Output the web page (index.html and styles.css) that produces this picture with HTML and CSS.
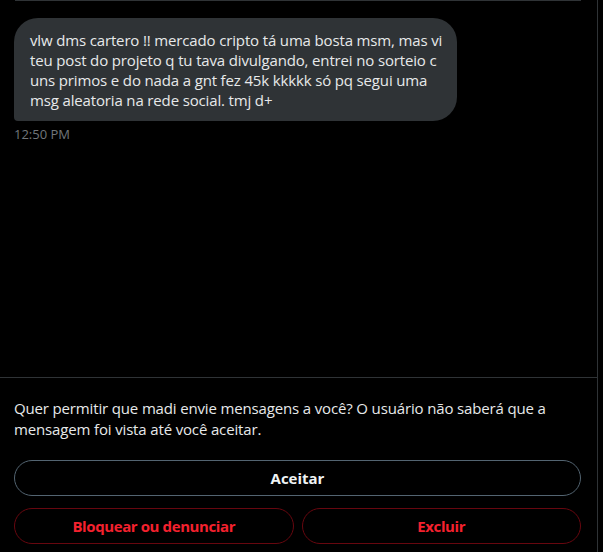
FILE: index.html
```html
<!DOCTYPE html>
<html lang="pt">
<head>
<meta charset="utf-8">
<link rel="stylesheet" href="styles.css">
</head>
<body>
<div class="column">
  <div class="convo">
    <div class="top-rule"></div>
    <div class="msg">
      <div class="bubble">vlw dms cartero !! mercado cripto tá uma bosta msm, mas vi<br>teu post do projeto q tu tava divulgando, entrei no sorteio c<br>uns primos e do nada a gnt fez 45k kkkkk só pq segui uma<br>msg aleatoria na rede social. tmj d+</div>
      <div class="time">12:50 PM</div>
    </div>
  </div>
  <div class="request">
    <p class="prompt">Quer permitir que madi envie mensagens a você? O usuário não saberá que a mensagem foi vista até você aceitar.</p>
    <button class="btn accept">Aceitar</button>
    <div class="row">
      <button class="btn danger">Bloquear ou denunciar</button>
      <button class="btn danger">Excluir</button>
    </div>
  </div>
</div>
</body>
</html>
```

FILE: styles.css
```css
html, body {
  margin: 0;
  padding: 0;
  background: #000;
  height: 100%;
}
body {
  font-family: "Open Sans", "Noto Sans", Arial, sans-serif;
  color: #e7e9ea;
  overflow: hidden;
}
.column {
  width: 597px;
  height: 552px;
  border-right: 1px solid #2f3336;
  display: flex;
  flex-direction: column;
}
.convo {
  flex: 1;
  padding: 0 16px 0 14px;
}
.top-rule {
  height: 1px;
  background: #2f3336;
  margin-left: 1px;
}
.msg {
  padding-top: 17px;
}
.bubble {
  width: 411px;
  background: #2f3336;
  color: #e7e9ea;
  font-size: 15px;
  line-height: 20px;
  letter-spacing: -0.15px;
  padding: 12px 16px 11px;
  border-radius: 24px 24px 24px 4px;
  white-space: nowrap;
}
.time {
  margin-top: 5px;
  font-size: 13px;
  line-height: 16px;
  color: #71767b;
}
.request {
  border-top: 1px solid #2f3336;
  padding: 20px 16px 8px 14px;
  display: flex;
  flex-direction: column;
  gap: 12px;
}
.prompt {
  margin: 0 0 8px;
  font-size: 15px;
  line-height: 21px;
  letter-spacing: -0.15px;
  color: #e7e9ea;
}
.btn {
  font-family: inherit;
  height: 36px;
  border-radius: 9999px;
  background: transparent;
  font-size: 15px;
  font-weight: 700;
  cursor: pointer;
}
.accept {
  border: 1px solid #536471;
  color: #eff3f4;
}
.row {
  display: flex;
  gap: 8px;
}
.row .btn {
  flex: 1;
}
.danger {
  border: 1px solid #67070f;
  color: #f4212e;
  letter-spacing: -0.4px;
}
```
